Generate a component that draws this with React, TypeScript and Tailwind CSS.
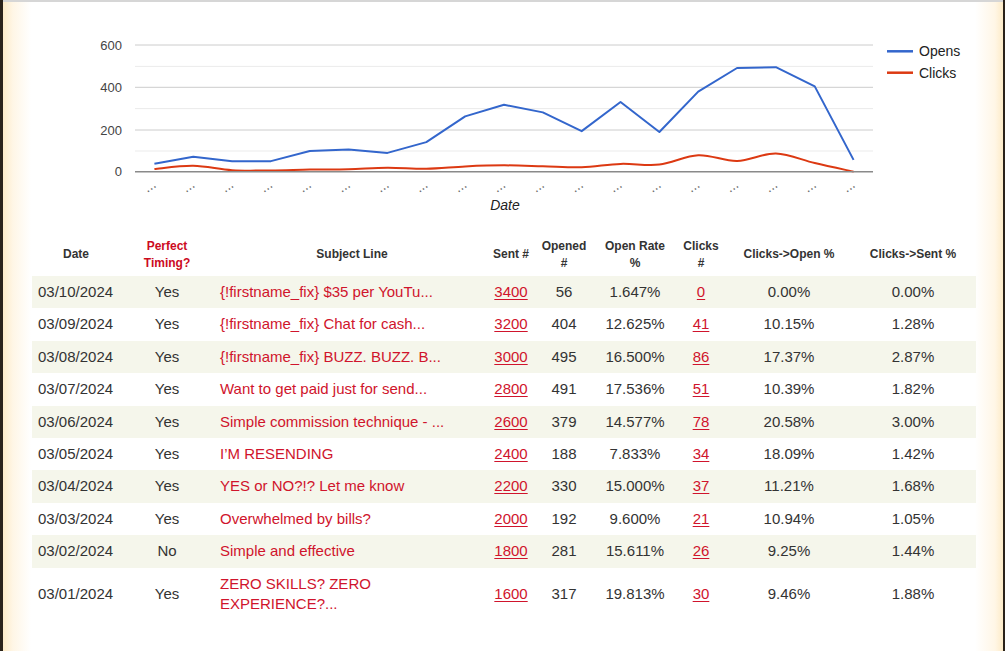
import React from "react";

const opens = [38, 71, 49, 50, 98, 105, 89, 140, 262, 317, 281, 192, 330, 188, 379, 491, 495, 404, 56];
const clicks = [13, 28, 7, 6, 10, 12, 19, 14, 25, 30, 26, 21, 37, 34, 78, 51, 86, 41, 0];

const X0 = 135;
const X1 = 873;
const STEP = (X1 - X0) / opens.length;
const BASE = 171.7;
const SCALE = (171.7 - 45) / 600;

const px = (i: number) => X0 + STEP * (i + 0.5);
const py = (v: number) => BASE - v * SCALE;

function straightPath(vals: number[]) {
  return vals.map((v, i) => `${i === 0 ? "M" : "L"}${px(i).toFixed(2)},${py(v).toFixed(2)}`).join(" ");
}

function smoothPath(vals: number[]) {
  const pts = vals.map((v, i) => [px(i), py(v)]);
  let d = `M${pts[0][0].toFixed(2)},${pts[0][1].toFixed(2)}`;
  for (let i = 0; i < pts.length - 1; i++) {
    const p0 = pts[i - 1] || pts[i];
    const p1 = pts[i];
    const p2 = pts[i + 1];
    const p3 = pts[i + 2] || p2;
    const c1x = p1[0] + (p2[0] - p0[0]) / 6;
    const c1y = Math.min(BASE, p1[1] + (p2[1] - p0[1]) / 6);
    const c2x = p2[0] - (p3[0] - p1[0]) / 6;
    const c2y = Math.min(BASE, p2[1] - (p3[1] - p1[1]) / 6);
    d += ` C${c1x.toFixed(2)},${c1y.toFixed(2)} ${c2x.toFixed(2)},${c2y.toFixed(2)} ${p2[0].toFixed(2)},${p2[1].toFixed(2)}`;
  }
  return d;
}

function Chart() {
  const font = "'Liberation Sans', Arial, sans-serif";
  const major = [45, 87.3, 130];
  const minor = [66.4, 108.6, 151];
  return (
    <svg width={999} height={218} viewBox="3 2 999 218" className="block">
      {minor.map((y) => (
        <line key={"m" + y} x1={X0} x2={X1} y1={y} y2={y} stroke="#ebebeb" strokeWidth={1} />
      ))}
      {major.map((y) => (
        <line key={"M" + y} x1={X0} x2={X1} y1={y} y2={y} stroke="#cccccc" strokeWidth={1} />
      ))}
      {[
        ["600", 45],
        ["400", 87.3],
        ["200", 130],
        ["0", 171.7],
      ].map(([t, y]) => (
        <text
          key={t as string}
          x={122}
          y={(y as number) + 4.5}
          textAnchor="end"
          fontSize={13}
          fontFamily={font}
          fill="#444444"
        >
          {t}
        </text>
      ))}
      <path d={straightPath(opens)} fill="none" stroke="#3366cc" strokeWidth={2} strokeLinejoin="round" />
      <path d={smoothPath(clicks)} fill="none" stroke="#dc3912" strokeWidth={2} />
      <line x1={X0} x2={X1} y1={BASE} y2={BASE} stroke="#8a8a8a" strokeWidth={1.6} />
      {opens.map((_, i) => (
        <text
          key={"xl" + i}
          x={px(i) + 2.5}
          y={186.5}
          textAnchor="end"
          fontSize={14}
          fontFamily={font}
          fill="#666666"
          transform={`rotate(-34 ${px(i) + 2.5} 186.5)`}
        >
          ...
        </text>
      ))}
      <text
        x={505}
        y={209.5}
        textAnchor="middle"
        fontSize={14}
        fontStyle="italic"
        fontFamily={font}
        fill="#222222"
      >
        Date
      </text>
      <line x1={887} x2={913} y1={51.3} y2={51.3} stroke="#3366cc" strokeWidth={2.5} />
      <text x={919} y={56.3} fontSize={14} fontFamily={font} fill="#222222">
        Opens
      </text>
      <line x1={887} x2={913} y1={72.7} y2={72.7} stroke="#dc3912" strokeWidth={2.5} />
      <text x={919} y={77.7} fontSize={14} fontFamily={font} fill="#222222">
        Clicks
      </text>
    </svg>
  );
}

type Row = {
  date: string;
  timing: string;
  subject: string;
  sent: string;
  opened: string;
  rate: string;
  clicks: string;
  cto: string;
  cts: string;
};

const rows: Row[] = [
  { date: "03/10/2024", timing: "Yes", subject: "{!firstname_fix} $35 per YouTu...", sent: "3400", opened: "56", rate: "1.647%", clicks: "0", cto: "0.00%", cts: "0.00%" },
  { date: "03/09/2024", timing: "Yes", subject: "{!firstname_fix} Chat for cash...", sent: "3200", opened: "404", rate: "12.625%", clicks: "41", cto: "10.15%", cts: "1.28%" },
  { date: "03/08/2024", timing: "Yes", subject: "{!firstname_fix} BUZZ. BUZZ. B...", sent: "3000", opened: "495", rate: "16.500%", clicks: "86", cto: "17.37%", cts: "2.87%" },
  { date: "03/07/2024", timing: "Yes", subject: "Want to get paid just for send...", sent: "2800", opened: "491", rate: "17.536%", clicks: "51", cto: "10.39%", cts: "1.82%" },
  { date: "03/06/2024", timing: "Yes", subject: "Simple commission technique - ...", sent: "2600", opened: "379", rate: "14.577%", clicks: "78", cto: "20.58%", cts: "3.00%" },
  { date: "03/05/2024", timing: "Yes", subject: "I’M RESENDING", sent: "2400", opened: "188", rate: "7.833%", clicks: "34", cto: "18.09%", cts: "1.42%" },
  { date: "03/04/2024", timing: "Yes", subject: "YES or NO?!? Let me know", sent: "2200", opened: "330", rate: "15.000%", clicks: "37", cto: "11.21%", cts: "1.68%" },
  { date: "03/03/2024", timing: "Yes", subject: "Overwhelmed by bills?", sent: "2000", opened: "192", rate: "9.600%", clicks: "21", cto: "10.94%", cts: "1.05%" },
  { date: "03/02/2024", timing: "No", subject: "Simple and effective", sent: "1800", opened: "281", rate: "15.611%", clicks: "26", cto: "9.25%", cts: "1.44%" },
  { date: "03/01/2024", timing: "Yes", subject: "ZERO SKILLS? ZERO EXPERIENCE?...", sent: "1600", opened: "317", rate: "19.813%", clicks: "30", cto: "9.46%", cts: "1.88%" },
];

function DataTable() {
  const th = "h-[41px] pb-[2px] align-middle text-center text-[12px] leading-[17px] font-bold text-[#333333] px-0";
  const td = "py-[6px] px-[6px] align-middle text-[15px] leading-[20.4px] text-[#333333]";
  const link = "text-[#d0142c] underline decoration-1 underline-offset-2";
  return (
    <table className="table-fixed border-collapse w-[944px]">
      <colgroup>
        <col className="w-[88px]" />
        <col className="w-[94px]" />
        <col className="w-[276px]" />
        <col className="w-[42px]" />
        <col className="w-[64px]" />
        <col className="w-[78px]" />
        <col className="w-[54px]" />
        <col className="w-[122px]" />
        <col className="w-[126px]" />
      </colgroup>
      <thead>
        <tr>
          <th className={th}>Date</th>
          <th className={th + " !text-[#cc0a1e]"}>
            Perfect
            <br />
            Timing?
          </th>
          <th className={th}>Subject Line</th>
          <th className={th}>Sent #</th>
          <th className={th}>
            Opened
            <br />#
          </th>
          <th className={th}>
            Open Rate
            <br />%
          </th>
          <th className={th}>
            Clicks
            <br />#
          </th>
          <th className={th}>Clicks-&gt;Open %</th>
          <th className={th}>Clicks-&gt;Sent %</th>
        </tr>
      </thead>
      <tbody>
        {rows.map((r, i) => (
          <tr key={r.date} className={i % 2 === 0 ? "bg-[#f5f6eb]" : "bg-transparent"}>
            <td className={td + " text-left"}>{r.date}</td>
            <td className={td + " text-center"}>{r.timing}</td>
            <td className={td + " text-left !text-[#d0142c]"}>{r.subject}</td>
            <td className={td + " text-center !px-0"}>
              <span className={link}>{r.sent}</span>
            </td>
            <td className={td + " text-center !px-0"}>{r.opened}</td>
            <td className={td + " text-center !px-0"}>{r.rate}</td>
            <td className={td + " text-center !px-0"}>
              <span className={link}>{r.clicks}</span>
            </td>
            <td className={td + " text-center"}>{r.cto}</td>
            <td className={td + " text-center"}>{r.cts}</td>
          </tr>
        ))}
      </tbody>
    </table>
  );
}

export default function App() {
  return (
    <div
      className="w-[1005px] h-[651px] flex overflow-hidden bg-white"
      style={{ fontFamily: "'Liberation Sans', Arial, sans-serif" }}
    >
      <div className="w-[3px] shrink-0 bg-[#2a2219]" />
      <div className="flex-1 border-t-2 border-[#d6d6d6] bg-[linear-gradient(to_right,#fdebc8_0px,#fff6e6_10px,#ffffff_28px,#ffffff_calc(100%_-_28px),#fff6e6_calc(100%_-_8px),#fdebc8_100%)]">
        <Chart />
        <div className="pt-[15px] pl-[29px]">
          <DataTable />
        </div>
      </div>
      <div className="w-[2px] shrink-0 bg-[#2a2219]" />
    </div>
  );
}
